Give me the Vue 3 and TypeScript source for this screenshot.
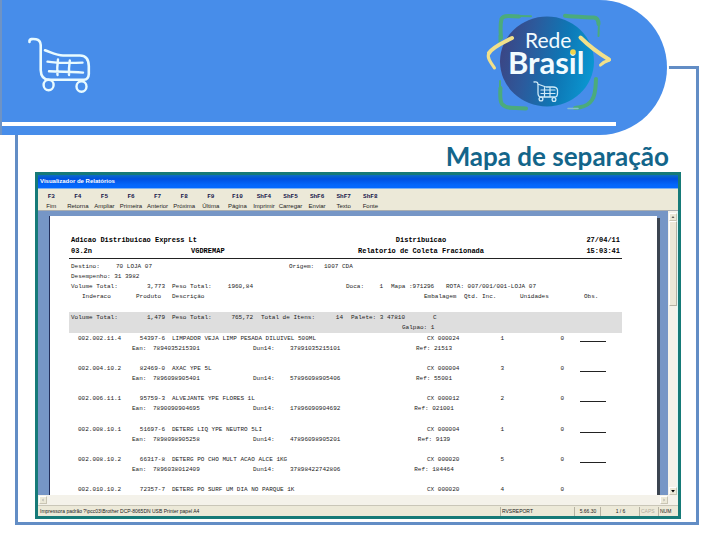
<script setup lang="ts">
interface Command {
  key: string
  label: string
}

interface Item {
  code: string
  product: string
  description: string
  pack: string
  qty: number
  units: number
  ean?: string
  dun?: string
  ref?: string
}

const commands: Command[] = [
  { key: 'F3', label: 'Fim' },
  { key: 'F4', label: 'Retorna' },
  { key: 'F5', label: 'Ampliar' },
  { key: 'F6', label: 'Primeira' },
  { key: 'F7', label: 'Anterior' },
  { key: 'F8', label: 'Próxima' },
  { key: 'F9', label: 'Última' },
  { key: 'F10', label: 'Página' },
  { key: 'ShF4', label: 'Imprimir' },
  { key: 'ShF5', label: 'Carregar' },
  { key: 'ShF6', label: 'Enviar' },
  { key: 'ShF7', label: 'Texto' },
  { key: 'ShF8', label: 'Fonte' },
]

const items: Item[] = [
  { code: '002.002.11.4', product: '54397-6', description: 'LIMPADOR VEJA LIMP PESADA DILUIVEL 500ML', pack: 'CX 000024', qty: 1, units: 0, ean: '7894035215301', dun: '37891035215101', ref: '21513' },
  { code: '002.004.10.2', product: '82469-0', description: 'AXAC YPE 5L', pack: 'CX 000004', qty: 3, units: 0, ean: '7896098905401', dun: '57896098905406', ref: '55001' },
  { code: '002.006.11.1', product: '95759-3', description: 'ALVEJANTE YPE FLORES 1L', pack: 'CX 000012', qty: 2, units: 0, ean: '7890090904695', dun: '17896090904692', ref: '021001' },
  { code: '002.008.10.1', product: '51697-6', description: 'DETERG LIQ YPE NEUTRO 5LI', pack: 'CX 000004', qty: 1, units: 0, ean: '7898098905258', dun: '47896098905201', ref: '9139' },
  { code: '002.008.10.2', product: '66317-8', description: 'DETERG PO CHO MULT ACAO ALCE 1KG', pack: 'CX 000020', qty: 5, units: 0, ean: '7896038012409', dun: '37898422742806', ref: '184464' },
  { code: '002.010.10.2', product: '72357-7', description: 'DETERG PO SURF UM DIA NO PARQUE 1K', pack: 'CX 000020', qty: 4, units: 0 },
]
</script>

<template>
  <main class="slide">
    <header class="banner">
      <div class="banner-art">
        <svg class="cart" viewBox="26 34 68 62" aria-hidden="true">
          <g fill="none" stroke="#e9fbff" stroke-linecap="round" stroke-linejoin="round">
            <path stroke-width="2.6" d="M29.5 42C29 38.500 33 38.800 36 39.200Q40.500 40 40.700 45V70Q41 79.500 49 79.800H84Q88.500 79.500 88.800 74V66Q88.500 55.500 80 55.500H63C57 55.500 51 52.300 45 50.300" />
            <path stroke-width="2.4" d="M47.500 61.600C55 62.800 70 63 82.500 62.600M49 71.300C58 71.600 73 72 83 72.600M58 59.500C57.200 65 57 70 57.500 75M69.800 60.500C69 66 68.800 71 69 75" />
            <ellipse stroke-width="2.4" cx="48.600" cy="85" rx="5" ry="5.200" />
            <ellipse stroke-width="2.4" cx="81.500" cy="86.500" rx="5" ry="5.200" />
          </g>
        </svg>
        <svg class="logo" viewBox="482 10 134 104" role="img" aria-label="Rede Brasil">
          <defs>
            <linearGradient id="globe" x1="0" x2="1" y1="0.400" y2="0.600">
              <stop offset="0" stop-color="#3b4584" />
              <stop offset="0.300" stop-color="#2c5a9c" />
              <stop offset="0.650" stop-color="#0e77b5" />
              <stop offset="1" stop-color="#0a98d2" />
            </linearGradient>
          </defs>
          <g fill="none" stroke="#4bab7c" stroke-linecap="round" stroke-linejoin="round">
            <path stroke-width="4" d="M501 38C500.500 32 500 25 501.500 19Q503 16 508 16L519 16.500" />
            <path stroke-width="2" d="M519 16L531 16.200M499.500 42V36" />
            <path stroke-width="4" d="M565 15.800C575 17 585 17 594 17.500Q598.500 18 598.500 24" />
            <path stroke-width="2" d="M599 22L598.500 36" />
            <path stroke-width="4" d="M500.500 88C500 95 500 101 502 104Q505 107.500 511 107.800L526 108.500" />
            <path stroke-width="2" d="M500 81V90" />
            <path stroke-width="4" d="M596 79C595.500 86 596 94 592 100Q588 106 580 107.300L575 108" />
            <path stroke-width="1.500" stroke="#83bdd0" d="M568 108.500H578M603 64L600 66" />
          </g>
          <ellipse cx="547" cy="61.500" rx="47" ry="45" fill="url(#globe)" />
          <g fill="none" stroke="#f1e08a" stroke-linecap="round" stroke-linejoin="round">
            <path stroke-width="4" d="M512 38C505 42 494 46 489 53" />
            <path stroke-width="3" d="M489 53C486.500 57 490 62 494.500 68" />
            <path stroke-width="4" d="M580.500 37.500C587 44 595 51 609 59.500" />
            <path stroke-width="3" d="M609.500 60C606 61 603 62.500 600.500 65" />
          </g>
          <text class="logo-small" x="525" y="48">Rede</text>
          <text class="logo-big" x="508" y="74">Brasil</text>
          <circle cx="573" cy="52" r="2.800" fill="#f0d44a" />
          <g fill="none" stroke="#cfeaf8" stroke-linecap="round" stroke-linejoin="round">
            <path stroke-width="1.300" d="M534 82C538 81.500 538 83 538 86V93Q538 97 541 97H555Q557.500 97 557.500 93V90Q557 87 553 87H546L539 84.500" />
            <path stroke-width="1.200" d="M541 90H555M541 93.500H555M544.500 87.500V96.500M550 87.500V96.500" />
            <circle stroke-width="1.300" cx="541" cy="99" r="1.900" />
            <circle stroke-width="1.300" cx="554" cy="99.500" r="1.900" />
          </g>
        </svg>
      </div>
      <div class="banner-rule"></div>
    </header>

    <section class="frame">
      <h1 class="title">Mapa de separação</h1>

      <div class="window">
        <div class="titlebar">Visualizador de Relatórios</div>
        <nav class="toolbar" aria-label="Comandos">
          <button v-for="c in commands" :key="c.key" type="button" class="command">
            <b class="command-key">{{ c.key }}</b>
            <span>{{ c.label }}</span>
          </button>
        </nav>

        <div class="viewer">
          <div class="desk">
            <article class="page">
              <header class="report-head">
                <span class="company">Adicao Distribuicao Express Lt</span>
                <span class="centered">Distribuicao</span>
                <span class="right">27/04/11</span>
                <span>03.2n</span>
                <span>VGDREMAP</span>
                <span class="centered">Relatorio de Coleta Fracionada</span>
                <span class="right">15:03:41</span>
              </header>

              <div class="line origin">
                <span>Destino:</span>
                <span>70 LOJA 07</span>
                <span>Origem:</span>
                <span>1007 CDA</span>
              </div>
              <div class="line">Desempenho: 31 3982</div>
              <div class="line totals">
                <span>Volume Total:</span>
                <span class="figure">3,773</span>
                <span>Peso Total:</span>
                <span class="figure">1960,84</span>
                <span></span>
                <span>Doca:</span>
                <span class="figure">1</span>
                <span>Mapa :971296</span>
                <span>ROTA: 007/001/001-LOJA 07</span>
              </div>

              <table class="items">
                <thead>
                  <tr class="row">
                    <th class="inset">Inderaco</th>
                    <th class="inset">Produto</th>
                    <th>Descrição</th>
                    <th>Embalagem</th>
                    <th>Qtd. Inc.</th>
                    <th>Unidades</th>
                    <th class="inset">Obs.</th>
                  </tr>
                </thead>
                <tbody class="band">
                  <tr class="line subtotal">
                    <td>Volume Total:</td>
                    <td class="figure">1,479</td>
                    <td>Peso Total:</td>
                    <td class="figure">765,72</td>
                    <td>Total de Itens:</td>
                    <td class="figure">14</td>
                    <td>Palete: 3 47810</td>
                    <td>C</td>
                  </tr>
                  <tr class="line shed">
                    <td>Galpao: 1</td>
                  </tr>
                </tbody>
                <tbody class="records">
                  <template v-for="item in items" :key="item.code">
                    <tr class="row">
                      <td>{{ item.code }}</td>
                      <td class="product">{{ item.product }}</td>
                      <td>{{ item.description }}</td>
                      <td class="pack">{{ item.pack }}</td>
                      <td class="count">{{ item.qty }}</td>
                      <td class="count">{{ item.units }}</td>
                      <td><span v-if="item.ean" class="blank"></span></td>
                    </tr>
                    <tr v-if="item.ean" class="row detail">
                      <td>Ean:</td>
                      <td>{{ item.ean }}</td>
                      <td>Dun14:</td>
                      <td>{{ item.dun }}</td>
                      <td class="centered">Ref: {{ item.ref }}</td>
                    </tr>
                  </template>
                </tbody>
              </table>
            </article>
          </div>

          <div class="vscroll">
            <button type="button" class="arrow" aria-label="Rolar para cima">
              <svg viewBox="0 0 8 8"><path d="M4 3L6 5H2Z" fill="#333" /></svg>
            </button>
            <div class="thumb"></div>
            <button type="button" class="arrow" aria-label="Rolar para baixo">
              <svg viewBox="0 0 8 8"><path d="M1.500 2.500H6.500L4 6Z" fill="#000" /></svg>
            </button>
          </div>

          <div class="hscroll">
            <button type="button" class="arrow" aria-label="Rolar para a esquerda">
              <svg viewBox="0 0 8 8"><path d="M4.500 2V6L3 4Z" fill="#999" /></svg>
            </button>
            <button type="button" class="arrow" aria-label="Rolar para a direita">
              <svg viewBox="0 0 8 8"><path d="M3.500 2V6L5 4Z" fill="#999" /></svg>
            </button>
          </div>
        </div>

        <footer class="statusbar">
          <span class="printer">Impressora padrão ?\pcc03\Brother DCP-8065DN USB Printer papel A4</span>
          <span class="cell">RVSREPORT</span>
          <span class="cell mid">5.66.30</span>
          <span class="cell mid">1 / 6</span>
          <span class="cell off">CAPS</span>
          <span class="cell">NUM</span>
        </footer>
      </div>
    </section>
  </main>
</template>

<style>
body {
  margin: 0;
  background: #fff;
}
</style>

<style scoped>
.slide {
  display: grid;
  grid-template-columns: 15px minmax(0, 1fr) 32px 21px;
  grid-template-rows: 66px 69px 1fr 15px;
  min-height: 100vh;
  box-sizing: border-box;
  font-family: "Liberation Sans", Arial, sans-serif;
}

.banner {
  grid-area: 1 / 1 / 3 / 3;
  z-index: 1;
  display: flex;
  flex-direction: column;
  justify-content: space-between;
  box-sizing: border-box;
  padding-bottom: 9px;
  border-left: 2px solid #6e93c4;
  border-radius: 0 68px 68px 0;
  background: #478dea;
  box-shadow: 2px 0 0 #fff;
}

.banner-art {
  display: flex;
  justify-content: space-between;
  align-items: flex-start;
  padding: 10px 51px 0 24px;
}

.cart {
  width: 68px;
  height: 62px;
  margin-top: 24px;
}

.logo {
  width: 134px;
  height: 104px;
}

.logo-small,
.logo-big {
  font-family: Lato, "Open Sans", sans-serif;
  fill: #f2fbff;
}

.logo-small {
  font-size: 21px;
}

.logo-big {
  font-size: 31px;
  font-weight: 700;
}

.banner-rule {
  height: 4px;
  margin-right: 51px;
  background: #fff;
}

.frame {
  grid-area: 2 / 2 / 4 / 4;
  display: flex;
  flex-direction: column;
  min-width: 0;
  padding: 66px 15px 3px 17px;
  border: 3px solid #628dc5;
}

.title {
  margin: 0;
  padding-right: 12px;
  height: 37px;
  font: 700 26px/42px Lato, "Open Sans", sans-serif;
  text-align: right;
  color: #13658a;
}

.window {
  flex: 1;
  display: flex;
  flex-direction: column;
  min-width: 0;
  border: 3px solid #167a78;
  background: #ece9d8;
}

.titlebar {
  padding-left: 2px;
  font-size: 6px;
  font-weight: 700;
  line-height: 13px;
  color: #fff;
  background: linear-gradient(#0c6cc4, #0050e0 30%, #0466fa 75%, #0468ff);
  border-bottom: 1px solid #7fb2f0;
}

.toolbar {
  display: grid;
  grid-template-columns: repeat(13, 1fr);
  width: 54%;
  height: 21px;
}

.command {
  display: flex;
  flex-direction: column;
  align-items: center;
  min-width: 0;
  padding: 3px 0 0;
  border: 0;
  background: none;
  font: 6px/10px "Liberation Sans", Arial, sans-serif;
  color: #222;
}

.command-key {
  font-family: "Liberation Mono", monospace;
  line-height: 9px;
  color: #15154a;
}

.viewer {
  flex: 1;
  display: grid;
  grid-template-columns: minmax(0, 1fr) 10px;
  grid-template-rows: 1fr 10px;
  border-top: 1px solid #a9adb0;
}

.desk {
  display: flex;
  min-width: 0;
  padding: 5px 11px 0;
  background: #7696c6;
}

.page {
  flex: 1;
  display: flex;
  flex-direction: column;
  min-width: 0;
  padding: 19px 35px 0 19px;
  border-left: 1px solid #23305c;
  background: #fff;
  box-shadow: 3px 2px 0 #3b4450;
  font: 6px/10px "Liberation Mono", "Courier New", monospace;
  color: #1c1c1c;
  white-space: pre;
}

.report-head {
  display: grid;
  grid-template-columns: 120fr 140fr 180fr 109fr;
  grid-auto-rows: 11px;
  padding: 0 2px 1px;
  border-bottom: 1px solid #222;
  margin-bottom: 3px;
  font-size: 7px;
  font-weight: 700;
  line-height: 11px;
  color: #000;
}

.company {
  grid-column: span 2;
}

.centered {
  text-align: center;
}

.right {
  text-align: right;
}

.line {
  display: grid;
  padding-left: 2px;
}

.origin {
  grid-template-columns: 45fr 173fr 35fr 298fr;
}

.totals {
  grid-template-columns: 60fr 34fr 46fr 42fr 93fr 20fr 17fr 55fr 184fr;
}

.subtotal {
  grid-template-columns: 60fr 34fr 46fr 42fr 65fr 25fr 90fr 189fr;
}

.line > *,
.row > *,
.report-head > * {
  min-width: 0;
}

.totals > :nth-child(3),
.subtotal > :nth-child(3) {
  padding-left: 7px;
}

.totals > :nth-child(n + 8) {
  padding-left: 8px;
}

.figure {
  text-align: right;
}

.items {
  flex: 1;
  display: flex;
  flex-direction: column;
}

.items thead {
  display: block;
}

.items th,
.items td {
  padding: 0;
  font-weight: 400;
  text-align: left;
}

.row {
  display: grid;
  grid-template-columns: 54fr 40fr 252fr 40fr 56fr 60fr 42fr;
  padding-left: 9px;
}

.items .inset {
  padding-left: 4px;
}

.band {
  display: block;
  margin: 10px 0 1px;
  padding-top: 1px;
  background: #dedede;
}

.shed {
  grid-template-columns: 1fr;
  padding-left: 333px;
}

.items .figure,
.items .product,
.items .count {
  text-align: right;
}

.items .subtotal > :nth-child(3) {
  padding-left: 7px;
}

.items .subtotal > :nth-child(5),
.items .subtotal > :nth-child(7) {
  padding-left: 8px;
}

.items .product {
  padding-right: 7px;
}

.items .pack {
  padding-left: 3px;
}

.items .count {
  padding-right: 16px;
}

.records {
  flex: 1;
  display: grid;
  grid-template-rows: repeat(5, 10px 1fr) 10px;
}

.detail {
  grid-template-columns: 21fr 100fr 37fr 116fr 56fr 160fr;
  padding-left: 63px;
}

.items .detail .centered {
  text-align: center;
}

.blank {
  display: block;
  width: 26px;
  height: 7px;
  border-bottom: 1px solid #222;
}

.arrow {
  display: block;
  box-sizing: border-box;
  width: 8px;
  height: 8px;
  padding: 0;
  border: 1px solid #c9c5b4;
  border-top-color: #fff;
  border-left-color: #fff;
  background: #ece9d8;
}

.arrow svg {
  display: block;
  width: 100%;
  height: 100%;
}

.vscroll {
  display: flex;
  flex-direction: column;
  align-items: center;
  padding-top: 2px;
  background: #f4f2ea;
  border-right: 1px solid #dff8f8;
}

.vscroll .arrow:last-child {
  margin-top: auto;
}

.thumb {
  width: 8px;
  height: 30%;
  box-sizing: border-box;
  border: 1px solid #b5b2a4;
  border-top-color: #fff;
  border-left-color: #fff;
  background: #ece8d8;
}

.hscroll {
  grid-column: 1 / -1;
  display: flex;
  justify-content: space-between;
  align-items: center;
  padding: 0 10px 0 1px;
  background: #f4f2ea;
}

.statusbar {
  display: grid;
  grid-template-columns: minmax(0, 1fr) 74px 26px 39px 19px 20px;
  border-top: 1px solid #c9c6b8;
  padding-top: 1px;
  font-size: 5px;
  line-height: 9px;
  color: #1a1a1a;
  white-space: nowrap;
}

.printer {
  padding-left: 2px;
}

.cell {
  padding-left: 1px;
  border-left: 1px solid #b5b2a2;
}

.mid {
  text-align: center;
}

.off {
  color: #b0ad9e;
}
</style>
